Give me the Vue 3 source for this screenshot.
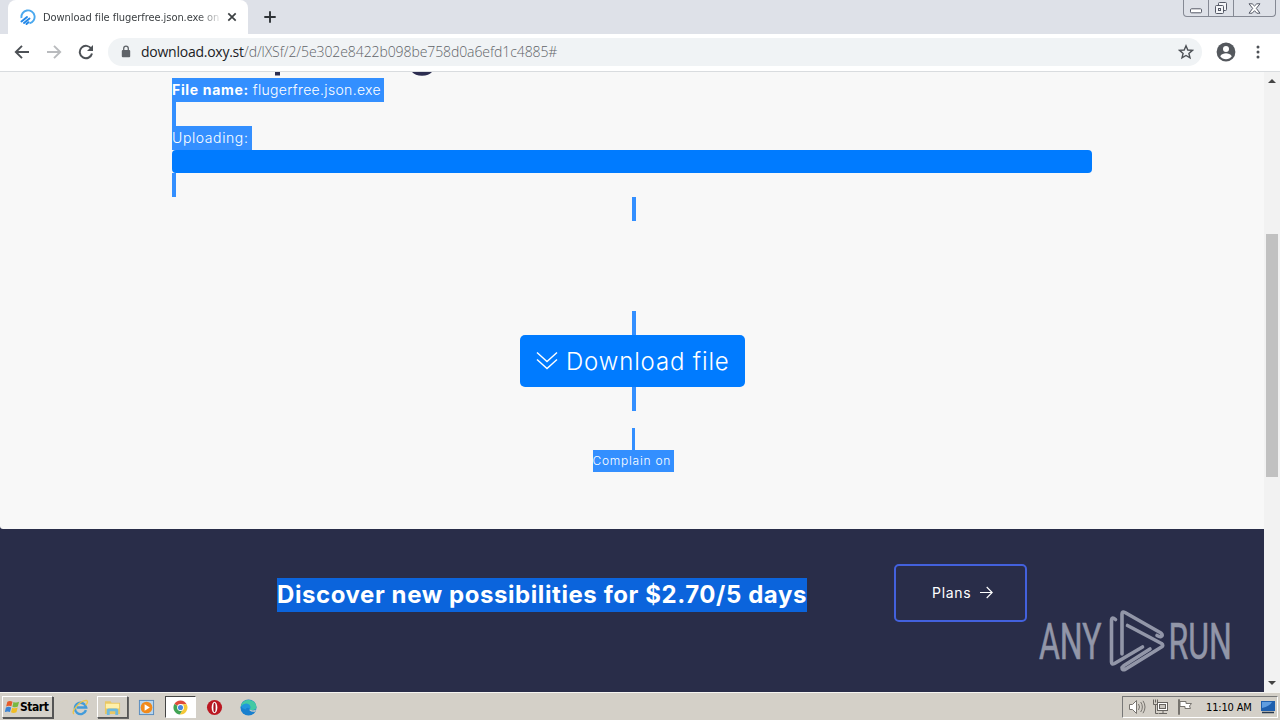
<template>
  <div class="screen">
    <header class="tabstrip">
      <div class="tab">
        <svg class="favicon" viewBox="0 0 16 16">
          <path d="M1.5 9A6.6 6.6 0 1 1 9.5 14.4" fill="none" stroke="#4aa8ee" stroke-width="1.9" />
          <path d="M1.5 12.5 7 8M4 14 9.5 9.5M6.5 15 8.5 13.2" stroke="#2388e8" stroke-width="1.9" stroke-linecap="round" />
        </svg>
        <span class="tab-title">Download file flugerfree.json.exe on</span>
        <svg class="tab-close" viewBox="0 0 10 10"><path d="M1.3 1.3 8.7 8.7M8.7 1.3 1.3 8.7" stroke="#3c4043" stroke-width="1.7" /></svg>
      </div>
      <svg class="new-tab" viewBox="0 0 12 12"><path d="M6 .3V11.7M.3 6H11.7" stroke="#2f3337" stroke-width="1.9" /></svg>
      <div class="window-buttons">
        <span class="wb min"><svg width="14" height="6" viewBox="0 0 14 6"><rect x="1.5" y=".8" width="11" height="4" rx="1" fill="#fff" stroke="#555966" /></svg></span>
        <span class="wb max">
          <svg width="14" height="14" viewBox="0 0 14 14" fill="#f4f5f8" stroke="#555966">
            <rect x="4.5" y="1.5" width="8" height="8" rx="1" />
            <rect x="1.5" y="4.5" width="8" height="8" rx="1" />
            <rect x="4.5" y="7.5" width="2" height="2" />
          </svg>
        </span>
        <span class="wb close">
          <svg width="13" height="11" viewBox="0 0 13 11"><path d="M1 .8H4.2L6.5 3 8.8.8H12L8.3 5.4 12 10.2H8.8L6.5 7.7 4.2 10.2H1L4.7 5.4Z" fill="#fff" stroke="#555966" /></svg>
        </span>
      </div>
    </header>

    <nav class="toolbar">
      <svg class="nav-icon" viewBox="0 0 16 16"><path d="M15 8H2M8 1.8 1.8 8 8 14.2" fill="none" stroke="#4d5156" stroke-width="1.9" /></svg>
      <svg class="nav-icon" viewBox="0 0 16 16"><path d="M1 8H14M8 1.8 14.2 8 8 14.2" fill="none" stroke="#b9bbbe" stroke-width="1.9" /></svg>
      <svg class="nav-icon" viewBox="0 0 16 16">
        <path d="M13.4 5A6.2 6.2 0 1 0 14 9.5" fill="none" stroke="#4d5156" stroke-width="2" />
        <path d="M15 1V7H9Z" fill="#4d5156" />
      </svg>
      <div class="omnibox">
        <svg class="lock" viewBox="0 0 10 13"><rect x=".8" y="5" width="8.4" height="7.2" rx="1" fill="#5f6368" /><path d="M2.7 5.5V3.5a2.3 2.3 0 0 1 4.6 0v2" fill="none" stroke="#5f6368" stroke-width="1.3" /></svg>
        <span class="url"><span class="host">download.oxy.st</span><span class="path">/d/lXSf/2/5e302e8422b098be758d0a6efd1c4885#</span></span>
        <svg class="star" viewBox="0 0 16 16"><path d="M8 1.8 9.8 6l4.6.4-3.5 3 1.1 4.5L8 11.5l-4 2.4 1.1-4.5-3.5-3L6.2 6Z" fill="none" stroke="#4d5156" stroke-width="1.4" /></svg>
      </div>
      <svg class="avatar" viewBox="0 0 20 20">
        <circle cx="10" cy="10" r="9.4" fill="#54585d" />
        <circle cx="10" cy="7" r="3" fill="#fff" />
        <path d="M4.2 14.2c1.2-2 3.8-2.9 5.8-2.9s4.6.9 5.8 2.9a7 7 0 0 1-11.6 0Z" fill="#fff" />
      </svg>
      <svg class="dots" viewBox="0 0 4 16" fill="#4d5156"><circle cx="2" cy="3" r="1.5" /><circle cx="2" cy="8" r="1.5" /><circle cx="2" cy="13" r="1.5" /></svg>
    </nav>

    <div class="viewport">
      <main class="page">
        <section class="file">
          <!-- descenders of the heading that is scrolled out of view -->
          <svg class="heading-edge" viewBox="0 0 920 6"><path d="M103 0h5v3.5h-5ZM240 0h20q-3 3.7-10 3.7T240 0Z" fill="#2c2d50" /></svg>
          <div class="line"><span class="sel name"><b>File name:</b> <span class="thin">flugerfree.json.exe</span></span></div>
          <div class="line"><i class="mark"></i></div>
          <div class="line"><span class="sel uploading">Uploading:</span></div>
          <div class="progress"></div>
          <div class="line"><i class="mark"></i></div>
          <div class="centered">
            <i class="mark"></i>
            <i class="mark after-gap"></i>
            <a class="download">
              <svg viewBox="0 0 22 20"><path d="M1 1.5 11 10.5 21 1.5M1 8.5 11 17.5 21 8.5" fill="none" stroke="#fff" stroke-width="1.4" /></svg>
              <span>Download file</span>
            </a>
            <i class="mark"></i>
            <i class="mark small"></i>
            <span class="sel complain">Complain on</span>
          </div>
        </section>
        <section class="promo">
          <h2>Discover new possibilities for $2.70/5 days</h2>
          <a class="plans">
            <span>Plans</span>
            <svg viewBox="0 0 13 13"><path d="M0 6.5H12M6.7 1 12.2 6.5 6.7 12" fill="none" stroke="#fff" stroke-width="1.1" /></svg>
          </a>
        </section>
      </main>
      <div class="scrollbar">
        <svg viewBox="0 0 8 4"><path d="M0 4 4 0 8 4Z" fill="#444" /></svg>
        <div class="thumb"></div>
        <svg viewBox="0 0 8 4"><path d="M0 0H8L4 4Z" fill="#444" /></svg>
      </div>
      <svg class="watermark" viewBox="0 0 210 70">
        <g fill="#9296a8" stroke="#9296a8" stroke-width=".6" font-family="Roboto, sans-serif" font-size="50">
          <text transform="translate(4 53) scale(.64 1)">ANY</text>
          <text transform="translate(133.500 53) scale(.64 1)">RUN</text>
        </g>
        <g fill="none" stroke="#9296a8" stroke-width="3.6" stroke-linejoin="round" stroke-linecap="round">
          <path d="M87 48V8Q87 5 90 6.5L126 27Q128.5 29.5 126 30.5Q124.5 31 122 29.5" />
          <path d="M92.500 19.500 126.500 37.500Q129 39.500 126.500 41L90 63.500Q87 64.500 87 61.500L89 59.500 115 43" />
          <path d="M80.500 13.500Q76.500 10 76.500 15V56Q76.500 59 79.500 57.500L107.500 41" />
        </g>
      </svg>
    </div>

    <footer class="taskbar">
      <div class="start">
        <svg viewBox="0 0 16 16">
          <path d="M2.5 2.5Q5 .8 8 2.3L6.8 7.3Q4 6 1.2 7.5Z" fill="#e65b29" />
          <path d="M9 2.6Q12 4 15 2.5L13.7 7.4Q11 9 7.9 7.6Z" fill="#78b840" />
          <path d="M1 8.5Q4 7 6.6 8.4L5.3 13.3Q3 12-.2 13.4Z" fill="#3a83d4" />
          <path d="M7.7 8.7Q10.5 10 13.5 8.5L12.2 13.5Q9 15 6.4 13.6Z" fill="#f1bd24" />
        </svg>
        <span>Start</span>
      </div>
      <div class="task">
        <svg viewBox="0 0 18 18">
          <path d="M14.8 11.8A6 6 0 1 1 15 9H5" fill="none" stroke="#429bda" stroke-width="2.6" />
          <path d="M2 15.8C-1 13 8 2 15 1.5q3 1-.5 5" fill="none" stroke="#ecc54b" stroke-width="1.5" />
        </svg>
      </div>
      <div class="task raised">
        <svg viewBox="0 0 18 18">
          <path d="M1 2.5h6l1 1.5h9v12H1Z" fill="#e9c764" /><path d="M2 5h14v5H2Z" fill="#fff0a9" /><path d="M3 17v-5q0-2 2-2h8q2 0 2 2v5h-3v-4H6v4Z" fill="#6db9df" />
        </svg>
      </div>
      <div class="task">
        <svg viewBox="0 0 18 18"><rect x="1.5" y="1.5" width="15" height="15" fill="#b7d5ed" stroke="#568bbd" /><circle cx="9" cy="9" r="6.2" fill="#f18a1c" /><path d="M7 5.5 12.5 9 7 12.5Z" fill="#fff" /></svg>
      </div>
      <div class="task pressed">
        <svg viewBox="0 0 18 18">
          <path d="M9 9 2.5 5.3A7.4 7.4 0 0 1 15.5 5.5H9Z" fill="#df4b3b" />
          <path d="M2.5 5.3A7.4 7.4 0 0 0 8.5 16.4L12 10.5 9 9Z" fill="#42a454" />
          <path d="M15.5 5.5A7.4 7.4 0 0 1 8.5 16.4L12 10 9 5.5Z" fill="#f5c838" />
          <circle cx="9" cy="9" r="3.6" fill="#fff" /><circle cx="9" cy="9" r="2.7" fill="#4687df" />
        </svg>
      </div>
      <div class="task">
        <svg viewBox="0 0 18 18"><circle cx="9" cy="9" r="8" fill="#bb1822" /><ellipse cx="9" cy="9" rx="3" ry="6" fill="#fff" /><ellipse cx="9" cy="9" rx="1.2" ry="5" fill="#a71320" /></svg>
      </div>
      <div class="task edge">
        <svg viewBox="0 0 18 18">
          <circle cx="9" cy="9" r="8.5" fill="#187fce" />
          <path d="M1 7A8.5 8.5 0 0 1 17.5 8.5Q17 12 12.5 12 10 12 10.5 10.5 11.5 8.5 9 7 5 4.8 1 8Z" fill="#43c9a4" />
          <path d="M1 8Q5 3 10 6 12 8 10.5 10.5 7 8 6 11 2 10 1 8Z" fill="#2197dc" />
          <path d="M10.5 10.5Q10 12 12.5 12 15.5 12.3 17 11L16 13.5Q12 14 10 12Z" fill="#d4d0c8" />
        </svg>
      </div>
      <div class="tray">
        <svg width="18" height="18" viewBox="0 0 18 18" fill="#fff" stroke="#77746f">
          <path d="M1.5 6.5h3l4-4v13l-4-4h-3Z" /><path d="M10.5 6q2 3 0 6M12.7 4q3.3 5 0 10M15 2.8q4 6.2 0 12.4" fill="none" />
        </svg>
        <svg width="18" height="18" viewBox="0 0 18 18" fill="#fff" stroke="#66635f">
          <rect x="5.5" y="4.5" width="10" height="8" /><rect x="7.5" y="6.5" width="6" height="4" fill="#c9c6c0" /><path d="M7 15.5h8M11 13v2" /><path d="M1.5 1.5v5h2v9h3M3.5 1.5v3M5.5 1.5v5h-2" fill="none" />
        </svg>
        <svg width="18" height="18" viewBox="0 0 18 18" fill="#fff" stroke="#77746f">
          <path d="M2.5 1.5v15h1v-15Z" /><path d="M4 3.5h6v2h5.5l-2 2.5 1 2.5H9v-2H4Z" />
        </svg>
        <span class="clock">11:10 AM</span>
        <svg class="desktop" width="16" height="14" viewBox="0 0 16 14"><path d="M1 1h14v10H1Z" fill="#1e5fae" /><path d="M2 2h10Q10 6 2 8Z" fill="#5f9de0" /><path d="M2 12.5h12" stroke="#26384f" stroke-width="1.5" /></svg>
      </div>
    </footer>
  </div>
</template>

<script setup>
</script>

<style>
body {
  margin: 0;
  overflow: hidden;
}
</style>

<style scoped>
* {
  box-sizing: border-box;
}

svg {
  display: block;
  flex: none;
}

.screen {
  display: flex;
  flex-direction: column;
  width: 1280px;
  height: 720px;
  font-family: Inter, sans-serif;
  white-space: nowrap;
}

/* browser chrome */
.tabstrip {
  display: flex;
  height: 34px;
  background: #dee1e8;
}

.tab {
  display: flex;
  align-items: center;
  width: 240px;
  margin-left: 8px;
  padding-left: 12px;
  background: #fff;
  border-radius: 8px 8px 0 0;
}

.favicon {
  width: 16px;
  height: 16px;
}

.tab-title {
  width: 176px;
  margin-left: 7px;
  overflow: hidden;
  font: 11px "DejaVu Sans Condensed", "DejaVu Sans", sans-serif;
  font-stretch: condensed;
  letter-spacing: -0.06px;
  color: #3c4043;
  mask-image: linear-gradient(to right, #000 155px, transparent 180px);
}

.tab-close {
  width: 10px;
  height: 10px;
  margin-left: 8px;
}

.new-tab {
  width: 12px;
  height: 12px;
  margin: 11px 0 0 16px;
}

.window-buttons {
  display: flex;
  width: 93px;
  height: 17px;
  margin-left: auto;
  margin-right: 4px;
  border: 1px solid #858994;
  border-top: 0;
  border-radius: 0 0 4px 4px;
}

.wb {
  display: flex;
  align-items: center;
  justify-content: center;
  width: 25px;
  border-right: 1px solid #858994;
}

.wb.min {
  padding-top: 5px;
}

.wb.close {
  width: 41px;
  border: 0;
}

.toolbar {
  display: flex;
  align-items: center;
  height: 38px;
  padding: 0 0 2px 14px;
  background: #fff;
  border-bottom: 1px solid #d9dcdf;
}

.nav-icon {
  width: 16px;
  height: 16px;
  margin-right: 16px;
}

.omnibox {
  display: flex;
  align-items: center;
  width: 1094px;
  height: 28px;
  margin-left: -2px;
  padding: 0 8px 0 13px;
  background: #f0f3f5;
  border-radius: 14px;
}

.lock {
  width: 10px;
  height: 13px;
}

.url {
  margin-left: 10px;
  font: 300 14px "Open Sans", sans-serif;
  letter-spacing: -0.09px;
  color: #5f6368;
}

.host {
  display: inline-block;
  width: 103px;
  font-weight: 400;
  letter-spacing: -0.25px;
  color: #202124;
}

.star {
  width: 16px;
  height: 16px;
  margin-left: auto;
}

.avatar {
  width: 20px;
  height: 20px;
  margin-left: 14px;
}

.dots {
  width: 4px;
  height: 16px;
  margin-left: 20px;
}

/* page */
.viewport {
  position: relative;
  display: flex;
  height: 620px;
}

.page {
  width: 1264px;
  background: #292d49;
}

.file {
  height: 457px;
  padding: 0 172px;
  background: #f8f8f8;
  border-bottom-left-radius: 3px;
}

.heading-edge {
  width: 920px;
  height: 6px;
}

.line {
  height: 24px;
  font-size: 14px;
  line-height: 24px;
}

.sel {
  display: inline-block;
  background: #338fff;
  color: #fff;
  font-weight: 300;
}

.name {
  width: 212px;
  height: 24px;
}

.name b {
  font-weight: 700;
  letter-spacing: 0.67px;
}

.thin {
  letter-spacing: 0.33px;
}

.uploading {
  width: 80px;
  height: 24px;
  letter-spacing: 0.6px;
}

.mark {
  display: block;
  width: 4px;
  height: 24px;
  background: #338fff;
}

.progress {
  height: 23px;
  background: #007bff;
  border-radius: 4px;
}

.centered {
  display: flex;
  flex-direction: column;
  align-items: center;
  width: 924px;
}

.after-gap {
  margin-top: 90px;
}

.download {
  display: flex;
  align-items: center;
  width: 225px;
  height: 52px;
  margin-right: 3px;
  padding-left: 16px;
  background: #007bff;
  border-radius: 5px;
  color: #fff;
  font-size: 24px;
  font-weight: 300;
  letter-spacing: 0.85px;
}

.download svg {
  width: 22px;
  height: 20px;
  margin-right: 8px;
}

.mark.small {
  width: 3px;
  height: 22px;
  margin-top: 17px;
  margin-right: 2px;
}

.complain {
  width: 81px;
  height: 22px;
  margin-right: 2px;
  font-size: 12px;
  line-height: 22px;
  letter-spacing: 0.75px;
}

.promo {
  display: flex;
  height: 163px;
  padding: 35px 0 0 277px;
}

.promo h2 {
  width: 530px;
  height: 34px;
  margin: 14px 87px 0 0;
  background: #0b64dc;
  color: #fff;
  font-size: 24px;
  font-weight: 700;
  line-height: 34px;
  letter-spacing: 0.58px;
}

.plans {
  display: flex;
  align-items: center;
  width: 133px;
  height: 58px;
  padding: 0 0 1px 36px;
  border: 2px solid #4361dd;
  border-radius: 5px;
  color: #fff;
  font-size: 14px;
  letter-spacing: 0.7px;
}

.plans svg {
  width: 13px;
  height: 13px;
  margin-left: 9px;
}

.scrollbar {
  display: flex;
  flex-direction: column;
  align-items: center;
  width: 16px;
  padding: 7px 0;
  background: #f2f2f2;
}

.scrollbar svg {
  width: 8px;
  height: 4px;
}

.thumb {
  width: 12px;
  height: 243px;
  margin: 151px 0 auto;
  background: #c1c1c1;
}

.watermark {
  position: absolute;
  left: 1035px;
  top: 534px;
  width: 210px;
  height: 70px;
}

/* taskbar */
.taskbar {
  display: flex;
  align-items: center;
  height: 28px;
  padding: 3px 2px 2px;
  background: #d4d0c8;
  border-top: 1px solid #f5f4f1;
}

.start {
  display: flex;
  align-items: center;
  width: 51px;
  height: 22px;
  margin-right: 15px;
  padding-left: 2px;
  border: 1px solid;
  border-color: #fff #555 #555 #fff;
  box-shadow: 1px 1px #555;
  font: bold 12px "DejaVu Sans Condensed", "DejaVu Sans", sans-serif;
  font-stretch: condensed;
  letter-spacing: -0.45px;
}

.start svg {
  width: 15px;
  height: 16px;
}

.task {
  display: flex;
  align-items: center;
  justify-content: center;
  width: 25px;
  height: 22px;
}

.task svg {
  width: 17px;
  height: 17px;
}

.raised {
  width: 31px;
  margin: 0 6px 0 4px;
  border: 1px solid;
  border-color: #fff #555 #555 #fff;
  box-shadow: 1px 1px #666;
}

.pressed {
  width: 31px;
  margin: 0 6px 0 6px;
  background: #fff;
  border: 1px solid;
  border-color: #444 #fff #fff #444;
}

.edge {
  margin-left: 9px;
}

.tray {
  display: flex;
  align-items: center;
  gap: 6px;
  width: 156px;
  height: 22px;
  margin-left: auto;
  padding-left: 5px;
  border: 1px solid;
  border-color: #777 #fff #fff #777;
}

.clock {
  width: 48px;
  margin-left: 6px;
  font: 11px "DejaVu Sans Condensed", "DejaVu Sans", sans-serif;
  font-stretch: condensed;
  letter-spacing: -0.15px;
}
</style>
